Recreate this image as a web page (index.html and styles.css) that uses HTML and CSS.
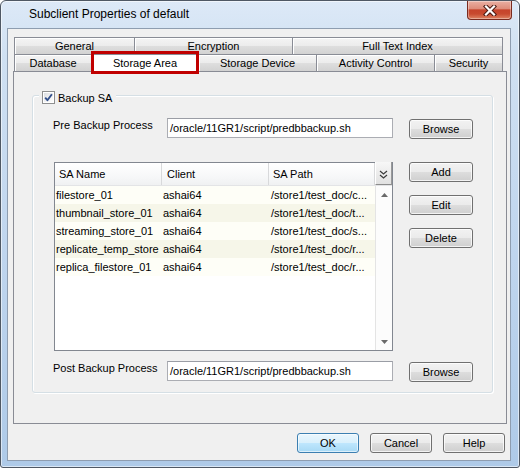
FILE: index.html
```html
<!DOCTYPE html>
<html>
<head>
<meta charset="utf-8">
<title>Subclient Properties of default</title>
<link rel="stylesheet" href="styles.css">
</head>
<body>
<div class="window">
  <div class="titlebar">
    <span class="title">Subclient Properties of default</span>
    <div class="close">
      <svg width="14" height="11" viewBox="0 0 14 11">
        <path d="M3 1.5 L11 9.5 M11 1.5 L3 9.5" stroke="#4a1a12" stroke-width="4.2" stroke-linecap="square" fill="none"/>
        <path d="M3 1.5 L11 9.5 M11 1.5 L3 9.5" stroke="#ffffff" stroke-width="2.2" stroke-linecap="square" fill="none"/>
      </svg>
    </div>
  </div>
  <div class="client">
    <div class="tabs">
      <div class="tabrow">
        <div class="tab t-general">General</div>
        <div class="tab t-enc">Encryption</div>
        <div class="tab t-fti">Full Text Index</div>
      </div>
      <div class="tabrow">
        <div class="tab t-db">Database</div>
        <div class="tab tab-active t-sa">Storage Area</div>
        <div class="tab t-sd">Storage Device</div>
        <div class="tab t-ac">Activity Control</div>
        <div class="tab t-sec">Security</div>
      </div>
    </div>
    <div class="panel">
      <div class="group">
        <div class="legend">
          <span class="checkbox">
            <svg width="11" height="11" viewBox="0 0 11 11">
              <path d="M2.2 5.6 L4.4 8.2 L8.9 2.2" stroke="#33508c" stroke-width="1.9" fill="none" stroke-linejoin="round"/>
            </svg>
          </span>
          <span class="legend-text">Backup SA</span>
        </div>
        <div class="form-row pre">
          <span class="label">Pre Backup Process</span>
          <div class="field">/oracle/11GR1/script/predbbackup.sh</div>
          <div class="btn">Browse</div>
        </div>
        <div class="list-row">
          <div class="table">
            <div class="thead">
              <div class="th c-name">SA Name</div>
              <div class="th c-client">Client</div>
              <div class="th c-path">SA Path</div>
              <div class="chooser">
                <svg width="9" height="9" viewBox="0 0 9 9">
                  <polyline points="1,1 4.5,4 8,1" stroke="#3c3c3c" stroke-width="1.2" fill="none"/>
                  <polyline points="1,5 4.5,8 8,5" stroke="#3c3c3c" stroke-width="1.2" fill="none"/>
                </svg>
              </div>
            </div>
            <div class="tbody">
              <div class="rows">
                <div class="tr"><span class="td c-name">filestore_01</span><span class="td c-client">ashai64</span><span class="td c-path">/store1/test_doc/c...</span></div>
                <div class="tr"><span class="td c-name">thumbnail_store_01</span><span class="td c-client">ashai64</span><span class="td c-path">/store1/test_doc/t...</span></div>
                <div class="tr"><span class="td c-name">streaming_store_01</span><span class="td c-client">ashai64</span><span class="td c-path">/store1/test_doc/s...</span></div>
                <div class="tr"><span class="td c-name">replicate_temp_store</span><span class="td c-client">ashai64</span><span class="td c-path">/store1/test_doc/r...</span></div>
                <div class="tr"><span class="td c-name">replica_filestore_01</span><span class="td c-client">ashai64</span><span class="td c-path">/store1/test_doc/r...</span></div>
              </div>
              <div class="scrollbar">
                <div class="sb-btn">
                  <svg width="7" height="4" viewBox="0 0 7 4"><polygon points="0,4 3.5,0 7,4" fill="#6a6a6a"/></svg>
                </div>
                <div class="sb-btn">
                  <svg width="7" height="4" viewBox="0 0 7 4"><polygon points="0,0 7,0 3.5,4" fill="#6a6a6a"/></svg>
                </div>
              </div>
            </div>
          </div>
          <div class="side-buttons">
            <div class="btn">Add</div>
            <div class="btn">Edit</div>
            <div class="btn">Delete</div>
          </div>
        </div>
        <div class="form-row post">
          <span class="label">Post Backup Process</span>
          <div class="field">/oracle/11GR1/script/predbbackup.sh</div>
          <div class="btn">Browse</div>
        </div>
      </div>
    </div>
    <div class="dialog-buttons">
      <div class="btn btn-default">OK</div>
      <div class="btn">Cancel</div>
      <div class="btn">Help</div>
    </div>
  </div>
</div>
</body>
</html>
```
FILE: styles.css
```css
html, body {
  margin: 0;
  padding: 0;
  background: #ffffff;
}

body {
  font-family: "Liberation Sans", Arial, sans-serif;
  font-size: 11px;
  color: #000000;
}

.window {
  width: 520px;
  height: 468px;
  box-sizing: border-box;
  border: 1px solid #4f5864;
  border-radius: 6px 6px 3px 3px;
  background: linear-gradient(180deg, #dde9f7 0%, #cfe0f2 12%, #bfd5ee 55%, #aecae8 100%);
  box-shadow: inset 0 0 0 1px rgba(255, 255, 255, 0.55);
  padding: 0 8px 6px 6px;
  display: flex;
  flex-direction: column;
}

.titlebar {
  flex: none;
  height: 27px;
  display: flex;
  justify-content: space-between;
  align-items: flex-start;
}

.title {
  font-size: 12px;
  line-height: 27px;
  padding-left: 22px;
  color: #000000;
}

.close {
  width: 45px;
  height: 19px;
  margin-right: -1px;
  box-sizing: border-box;
  border: 1px solid #7a2b1f;
  border-top: none;
  border-radius: 0 0 4px 4px;
  background: linear-gradient(180deg, #eab0a3 0%, #de8d7b 42%, #c6442b 50%, #c84a2f 72%, #de8464 100%);
  box-shadow: inset 0 0 0 1px rgba(255, 255, 255, 0.35);
  display: flex;
  align-items: center;
  justify-content: center;
}

.client {
  flex: 1;
  border: 1px solid #8e9db0;
  background: #f0f0f0;
  padding: 8px 3px 7px 5px;
  display: flex;
  flex-direction: column;
}

/* Tabs */
.tabs {
  flex: none;
  margin-left: 1px;
}

.tabrow {
  display: flex;
  height: 17px;
}

.tab {
  box-sizing: border-box;
  height: 17px;
  border: 1px solid #898c95;
  border-bottom: none;
  border-left: none;
  background: linear-gradient(180deg, #f4f4f4 0%, #ececec 48%, #dedede 52%, #d2d2d2 100%);
  box-shadow: inset 1px 1px 0 #ffffff;
  text-align: center;
  line-height: 16px;
  white-space: nowrap;
}

.tab:first-child {
  border-left: 1px solid #898c95;
}

.t-general { width: 121px; }
.t-enc { width: 158px; }
.t-fti { width: 210px; }
.t-db { width: 78px; }
.t-sa { width: 107px; }
.t-sd { width: 118px; }
.t-ac { width: 118px; }
.t-sec { width: 68px; }

.tab-active {
  position: relative;
  background: #ffffff;
  box-shadow: none;
  z-index: 2;
}

.tab-active::after {
  content: "";
  position: absolute;
  left: -1px;
  right: -1px;
  top: -4px;
  bottom: -3px;
  border: 3px solid #c00000;
}

/* Panel */
.panel {
  flex: none;
  height: 353px;
  box-sizing: border-box;
  border: 1px solid #898c95;
  background: #f0f0f0;
  display: flex;
  flex-direction: column;
}

.group {
  margin: 23px 13px 0 18px;
  border: 1px solid #d5dfe5;
  border-radius: 3px;
  box-shadow: inset 1px 1px 0 #ffffff, 1px 1px 0 #ffffff;
  padding: 0 19px 10px 20px;
  display: flex;
  flex-direction: column;
}

.legend {
  align-self: flex-start;
  display: flex;
  align-items: center;
  gap: 3px;
  height: 13px;
  margin: -5px 0 0 -14px;
  padding: 0 4px 0 3px;
  background: #f0f0f0;
}

.checkbox {
  width: 13px;
  height: 13px;
  box-sizing: border-box;
  border: 1px solid #8e8f8f;
  background: linear-gradient(135deg, #d8dbe0 0%, #f4f4f4 60%, #ffffff 100%);
  box-shadow: inset 0 0 0 1px #ffffff;
  display: flex;
  align-items: center;
  justify-content: center;
}

.legend-text {
  line-height: 12px;
}

.form-row {
  display: flex;
  align-items: flex-start;
  height: 21px;
}

.form-row.pre {
  margin-top: 14px;
}

.form-row.post {
  margin-top: 10px;
}

.label {
  flex: none;
  width: 114px;
  line-height: 14px;
  white-space: nowrap;
}

.field {
  flex: none;
  width: 226px;
  height: 20px;
  box-sizing: border-box;
  border: 1px solid #abadb3;
  border-top-color: #9a9da5;
  background: #ffffff;
  padding-left: 2px;
  line-height: 18px;
  white-space: nowrap;
  overflow: hidden;
}

.form-row .btn {
  margin-left: 16px;
  margin-top: 1px;
}

.btn {
  flex: none;
  width: 64px;
  height: 20px;
  box-sizing: border-box;
  border: 1px solid #707070;
  border-radius: 3px;
  background: linear-gradient(180deg, #f2f2f2 0%, #ebebeb 48%, #dddddd 52%, #cfcfcf 100%);
  box-shadow: inset 0 0 0 1px rgba(255, 255, 255, 0.75);
  text-align: center;
  line-height: 18px;
  white-space: nowrap;
}

.btn-default {
  border-color: #3c7fb1;
  background: linear-gradient(180deg, #eaf6fd 0%, #d9f0fc 48%, #bee6fd 52%, #a7d9f5 100%);
  box-shadow: inset 0 0 0 1px rgba(255, 255, 255, 0.6);
}

/* List */
.list-row {
  display: flex;
  align-items: flex-start;
  margin-top: 23px;
}

.table {
  flex: none;
  margin-left: 1px;
  width: 339px;
  height: 189px;
  box-sizing: border-box;
  border: 1px solid #828790;
  background: #ffffff;
  display: flex;
  flex-direction: column;
}

.thead {
  flex: none;
  display: flex;
  height: 23px;
  box-sizing: border-box;
  border-bottom: 1px solid #e3e4e6;
  background: linear-gradient(180deg, #ffffff 0%, #f7f8f9 60%, #f0f1f2 100%);
}

.th {
  box-sizing: border-box;
  border-right: 1px solid #d8d9db;
  line-height: 22px;
  padding-left: 4px;
  white-space: nowrap;
}

.th.c-client {
  padding-left: 5px;
}

.c-name { width: 107px; }
.c-client { width: 107px; }
.c-path { width: 106px; }

.chooser {
  width: 17px;
  height: 23px;
  margin-top: -1px;
  box-sizing: border-box;
  border-left: 1px solid #ffffff;
  border-right: 1px solid #9a9a9a;
  border-bottom: 1px solid #8c8c8c;
  background: linear-gradient(180deg, #f7f7f7 0%, #ececec 50%, #e1e1e1 100%);
  display: flex;
  align-items: center;
  justify-content: center;
  padding-top: 3px;
}

.tbody {
  flex: 1;
  min-height: 0;
  display: flex;
}

.rows {
  width: 320px;
  display: flex;
  flex-direction: column;
}

.tr {
  display: flex;
  height: 18px;
  line-height: 18px;
  background: #fefef7;
}

.tr:nth-child(even) {
  background: #f6f6e9;
}

.td {
  box-sizing: border-box;
  padding-left: 1px;
  white-space: nowrap;
  overflow: hidden;
}

.td.c-path {
  padding-left: 2px;
}

.scrollbar {
  width: 17px;
  box-sizing: border-box;
  border-left: 1px solid #e4e4e4;
  background: #fcfcfc;
  display: flex;
  flex-direction: column;
  justify-content: space-between;
}

.sb-btn {
  height: 17px;
  display: flex;
  align-items: center;
  justify-content: center;
}

.side-buttons {
  margin-left: 16px;
  display: flex;
  flex-direction: column;
  gap: 13px;
}

/* Dialog buttons */
.dialog-buttons {
  flex: none;
  margin-top: 9px;
  display: flex;
  justify-content: flex-end;
  gap: 11px;
  padding-right: 2px;
}

.dialog-buttons .btn {
  width: 62px;
}
```
